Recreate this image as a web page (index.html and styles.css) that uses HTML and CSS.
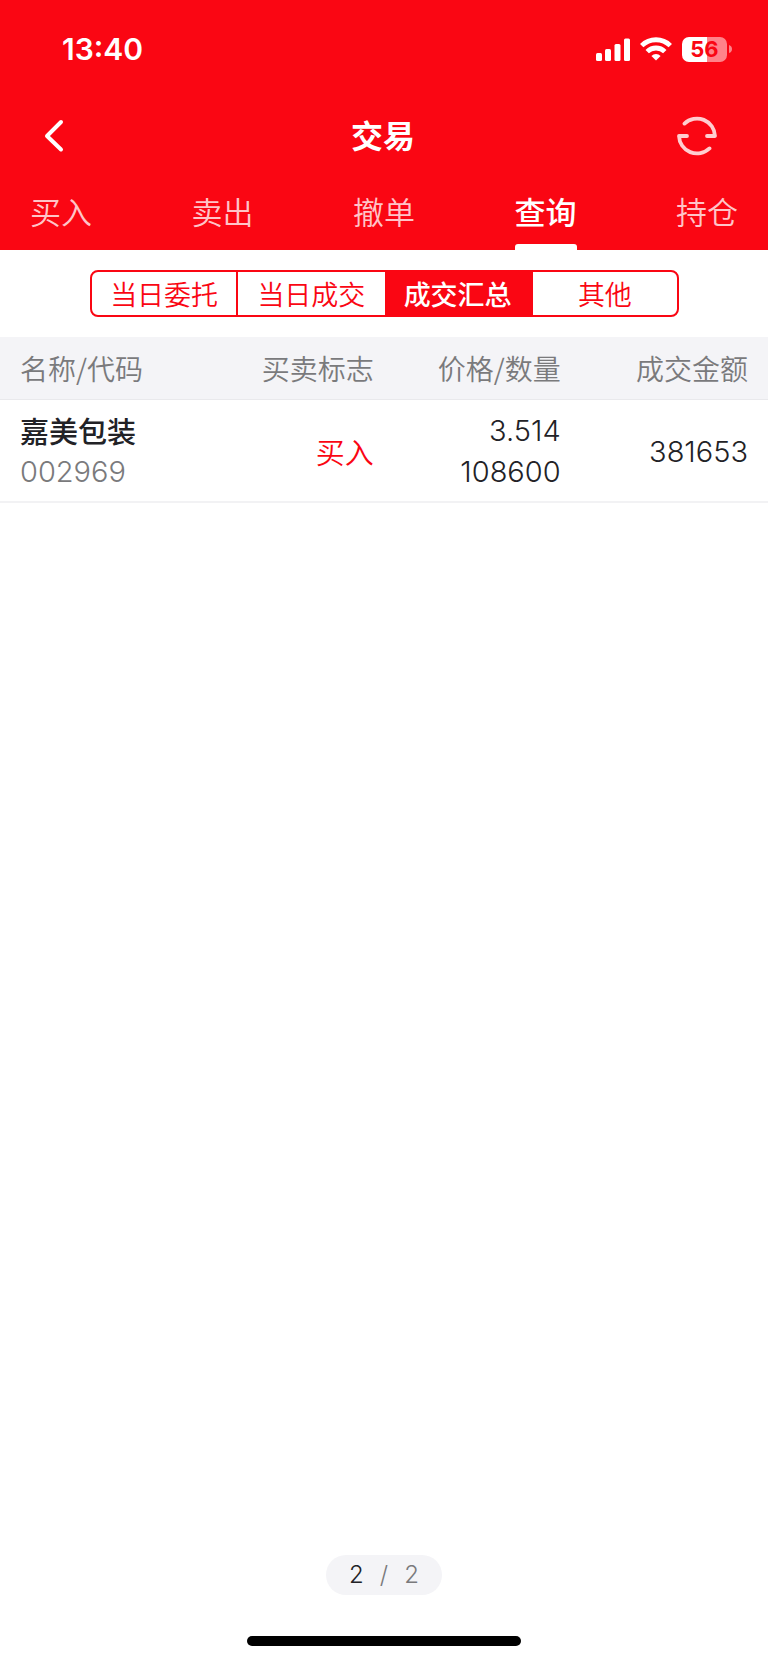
FILE: index.html
```html
<!DOCTYPE html>
<html lang="zh-CN">
<head>
    <meta charset="UTF-8">
    <meta name="viewport" content="width=device-width, initial-scale=1.0">
    <title>交易</title>
    <link rel="stylesheet" href="styles.css">
</head>
<body>
    <header class="header">
        <!-- Status bar -->
        <div class="status-bar">
            <span class="time">13:40</span>
            <div class="status-icons">
                <svg width="34" height="23" viewBox="0 0 34 23" fill="#fff">
                    <rect x="0" y="15" width="6" height="8" rx="1.5"/>
                    <rect x="9" y="11" width="6" height="12" rx="1.5"/>
                    <rect x="18.5" y="6" width="6" height="17" rx="1.5"/>
                    <rect x="28" y="0.5" width="6" height="22.5" rx="1.5"/>
                </svg>
                <svg width="32" height="24" viewBox="0 0 32 24" fill="none" stroke="#fff" stroke-width="4.8">
                    <path d="M1.7 8.6a20.4 20.4 0 0 1 28.6 0"/>
                    <path d="M7.2 14.6a12.5 12.5 0 0 1 17.6 0"/>
                    <path d="M16 23.6l-4.6-4.6a6.5 6.5 0 0 1 9.2 0z" fill="#fff" stroke="none"/>
                </svg>
                <div class="battery">
                    <span class="battery-body">56</span>
                    <svg width="3" height="8" viewBox="0 0 3 8"><path d="M0 0q3 1 3 4t-3 4z" fill="#fff" fill-opacity="0.5"/></svg>
                </div>
            </div>
        </div>

        <!-- Title bar -->
        <div class="title-bar">
            <button class="icon-button" type="button" aria-label="返回">
                <svg width="40" height="40" viewBox="0 0 40 40" fill="none" stroke="#fff" stroke-width="4" stroke-linecap="round" stroke-linejoin="round">
                    <path d="M26 6L12 20l14 13.5"/>
                </svg>
            </button>
            <h1>交易</h1>
            <button class="icon-button" type="button" aria-label="刷新">
                <svg width="40" height="40" viewBox="0 0 40 40" fill="none" stroke="#ffcdd0" stroke-width="3.8" stroke-linecap="round" stroke-linejoin="round">
                    <path d="M7.5 7.6A18 18 0 0 1 38 20h-8"/>
                    <path d="M32.5 32.4A18 18 0 0 1 2 20h8"/>
                </svg>
            </button>
        </div>

        <!-- Main tabs -->
        <nav class="tabs">
            <a href="#buy">买入</a>
            <a href="#sell">卖出</a>
            <a href="#cancel">撤单</a>
            <a href="#query" class="active">查询</a>
            <a href="#position">持仓</a>
        </nav>
    </header>

    <main>
        <div class="segment">
            <button type="button">当日委托</button>
            <button type="button">当日成交</button>
            <button type="button" class="active">成交汇总</button>
            <button type="button">其他</button>
        </div>

        <table class="deals">
            <thead>
                <tr>
                    <th>名称/代码</th>
                    <th>买卖标志</th>
                    <th>价格/数量</th>
                    <th>成交金额</th>
                </tr>
            </thead>
            <tbody>
                <tr>
                    <td>
                        <div class="name">嘉美包装</div>
                        <div class="code">002969</div>
                    </td>
                    <td class="side">买入</td>
                    <td>
                        <div>3.514</div>
                        <div>108600</div>
                    </td>
                    <td>381653</td>
                </tr>
            </tbody>
        </table>
    </main>

    <footer class="footer">
        <div class="pager">
            <span class="current">2</span>
            <span>/</span>
            <span>2</span>
        </div>
        <div class="home-bar"></div>
    </footer>
</body>
</html>
```
FILE: styles.css
```css
* {
    margin: 0;
    padding: 0;
    box-sizing: border-box;
}
body {
    display: flex;
    flex-direction: column;
    min-height: 100vh;
    font-family: "Noto Sans CJK SC", sans-serif;
    background: #fff;
    color: #222226;
}
button {
    border: none;
    background: none;
    font-family: inherit;
    cursor: pointer;
}
svg {
    display: block;
}

/* Numbers */
.status-bar,
.deals td,
.pager {
    font-family: Inter, sans-serif;
    font-weight: 350;
}

/* Header */
.header {
    background: #fa0613;
    color: #fff;
}
.status-bar {
    display: flex;
    justify-content: space-between;
    align-items: center;
    height: 98px;
    padding: 0 36px 0 62px;
}
.time {
    font-size: 30px;
    font-weight: 600;
}
.status-icons {
    display: flex;
    align-items: center;
    gap: 10px;
}
.battery {
    display: flex;
    align-items: center;
    gap: 2px;
}
.battery-body {
    width: 45px;
    height: 25px;
    border-radius: 7px;
    background: linear-gradient(90deg, #fff 56%, #ff838a 56%);
    color: #fa0613;
    font-size: 22px;
    font-weight: 700;
    line-height: 25px;
    text-align: center;
}
.title-bar {
    display: grid;
    grid-template-columns: 1fr auto 1fr;
    align-items: center;
    height: 76px;
    padding: 0 51px 0 35px;
}
.title-bar h1 {
    padding: 0 0 4px 14px;
    font-size: 32px;
    font-weight: 700;
    line-height: 40px;
}
.icon-button {
    width: 40px;
    height: 40px;
}
.icon-button:last-child {
    justify-self: end;
}
.tabs {
    display: flex;
    justify-content: space-between;
    padding: 4px 30px 0;
}
.tabs a {
    color: #ffc4c8;
    font-size: 31px;
    font-weight: 350;
    line-height: 66px;
    text-decoration: none;
}
.tabs a::after {
    content: "";
    display: block;
    height: 6px;
    border-radius: 3px 3px 0 0;
}
.tabs .active {
    color: #fff;
    font-weight: 500;
}
.tabs .active::after {
    background: #fff;
}

/* Query type */
.segment {
    display: grid;
    grid-template-columns: repeat(4, 1fr);
    height: 47px;
    margin: 20px 89px 20px 90px;
    border: 2px solid #fa0613;
    border-radius: 8px;
    overflow: hidden;
}
.segment button {
    color: #fa0613;
    font-size: 27px;
    font-weight: 350;
    line-height: 43px;
}
.segment button:first-child {
    border-right: 2px solid #fa0613;
}
.segment button:last-child {
    border-left: 2px solid #fa0613;
}
.segment .active {
    background: #fa0613;
    color: #fff;
    font-weight: 500;
}

/* Deals table */
.deals {
    width: 100%;
    table-layout: fixed;
    border-collapse: collapse;
    text-align: right;
}
.deals th {
    height: 62px;
    background: #f4f4f7;
    border-bottom: 1px solid #e9e9ec;
    color: #7a7a7c;
    font-size: 28px;
    font-weight: 350;
    line-height: 40px;
}
.deals td {
    height: 103px;
    padding-top: 2px;
    border-bottom: 2px solid #f2f2f4;
    font-size: 29px;
    line-height: 41px;
}
.deals th:first-child,
.deals td:first-child {
    padding-left: 20px;
    text-align: left;
}
.deals th:last-child,
.deals td:last-child {
    width: 27%;
    padding-right: 20px;
}
.deals .name,
.deals .side {
    font-family: "Noto Sans CJK SC", sans-serif;
}
.deals .name {
    font-weight: 500;
}
.deals .code {
    color: #7a7a7c;
}
.deals .side {
    color: #fa0613;
}

/* Footer */
.footer {
    display: flex;
    flex-direction: column;
    align-items: center;
    gap: 41px;
    margin-top: auto;
    padding-bottom: 17px;
}
.pager {
    display: flex;
    justify-content: center;
    gap: 16px;
    width: 116px;
    border-radius: 20px;
    background: #f4f4f7;
    color: #7a7a7c;
    font-size: 24px;
    line-height: 40px;
}
.pager .current {
    color: #222226;
}
.home-bar {
    width: 274px;
    height: 10px;
    border-radius: 5px;
    background: #000;
}
```
